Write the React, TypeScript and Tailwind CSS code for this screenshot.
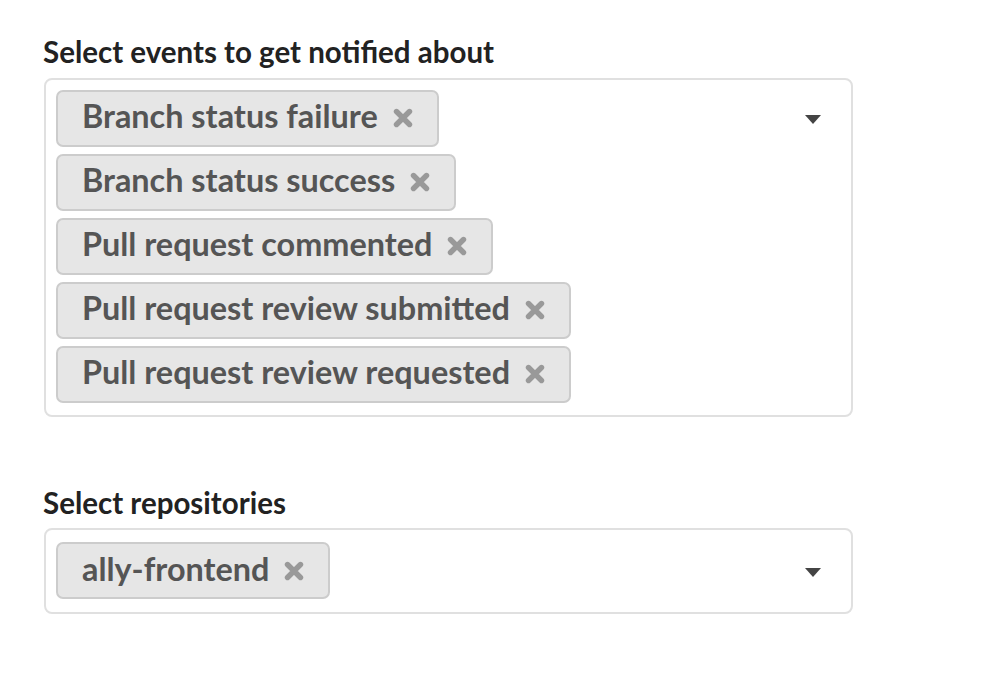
import React from "react";

const events = [
  "Branch status failure",
  "Branch status success",
  "Pull request commented",
  "Pull request review submitted",
  "Pull request review requested",
];

const repos = ["ally-frontend"];

const RemoveIcon = () => (
  <svg width="20" height="20" viewBox="0 0 20 20" className="shrink-0">
    <path
      d="M3.5 3.5 L16.5 16.5 M16.5 3.5 L3.5 16.5"
      stroke="#999999"
      strokeWidth="5.4"
      strokeLinecap="round"
    />
  </svg>
);

const Caret = () => (
  <svg width="16" height="9" viewBox="0 0 16 9">
    <path d="M0 0 H16 L8 9 Z" fill="#444444" />
  </svg>
);

const Tag = ({ label }: { label: string }) => (
  <div className="flex items-center h-[57px] pl-[24px] pr-[24px] gap-[15px] bg-[#e6e6e6] border-2 border-[#cccccc] rounded-[7px]">
    <span className="text-[32.4px] font-bold text-[#555555] leading-none pb-[3px]">
      {label}
    </span>
    <RemoveIcon />
  </div>
);

const MultiSelect = ({
  items,
  className,
}: {
  items: string[];
  className: string;
}) => (
  <div
    className={`ml-[1px] w-[809px] border-2 border-[#e0e0e0] rounded-[8px] flex items-start justify-between pl-[10px] pr-[30px] ${className}`}
  >
    <div className="flex flex-col items-start gap-[7px]">
      {items.map((item) => (
        <Tag key={item} label={item} />
      ))}
    </div>
    <div className="h-[57px] flex items-center pt-[3px]">
      <Caret />
    </div>
  </div>
);

export default function App() {
  return (
    <div className="w-[990px] h-[676px] bg-white pl-[43px] pt-[37px] font-['Lato','Liberation_Sans',sans-serif]">
      <h2 className="text-[29.5px] font-bold text-[#222222] leading-none mb-[11px]">
        Select events to get notified about
      </h2>
      <MultiSelect items={events} className="pt-[10px] pb-[12px]" />
      <h2 className="text-[29.5px] font-bold text-[#222222] leading-none mt-[71px] mb-[11px]">
        Select repositories
      </h2>
      <MultiSelect items={repos} className="pt-[12px] pb-[13px]" />
    </div>
  );
}
